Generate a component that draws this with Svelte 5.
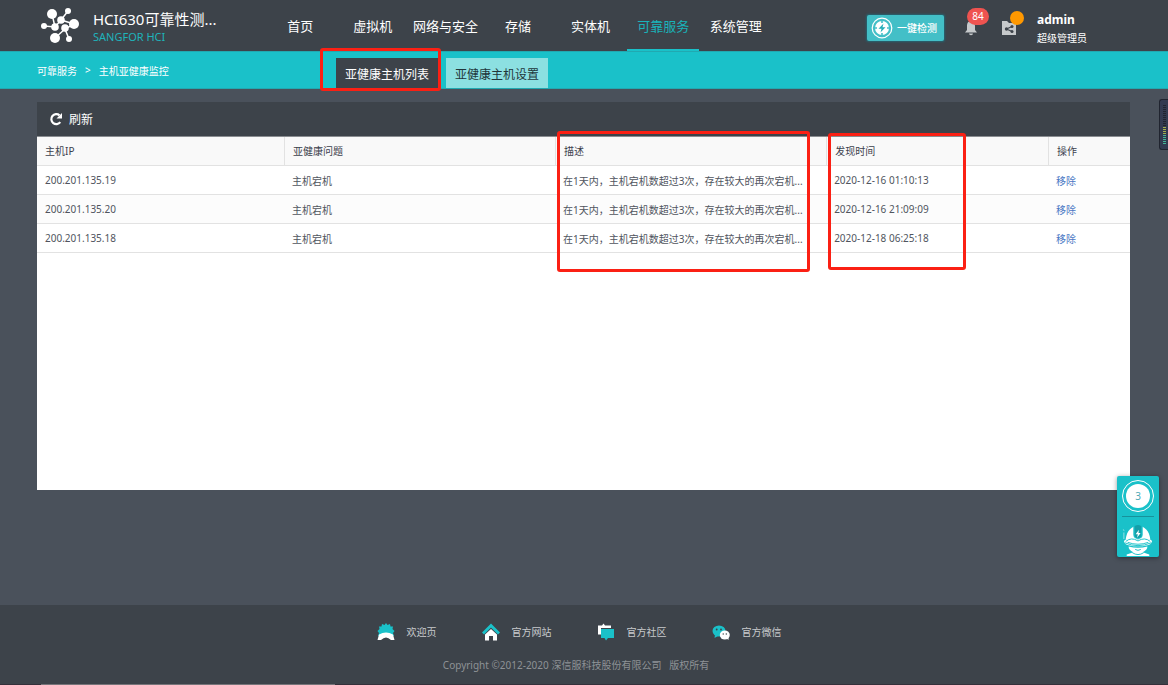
<script>
	let current = '可靠服务';
	let activeTab = '亚健康主机列表';

	const navItems = ['首页', '虚拟机', '网络与安全', '存储', '实体机', '可靠服务', '系统管理'];
	const tabs = ['亚健康主机列表', '亚健康主机设置'];

	const problem = '主机宕机';
	const desc = '在1天内，主机宕机数超过3次，存在较大的再次宕机...';

	let hosts = [
		{ ip: '200.201.135.19', problem, desc, time: '2020-12-16 01:10:13' },
		{ ip: '200.201.135.20', problem, desc, time: '2020-12-16 21:09:09' },
		{ ip: '200.201.135.18', problem, desc, time: '2020-12-18 06:25:18' }
	];

	function removeHost(ip) {
		hosts = hosts.filter((h) => h.ip !== ip);
	}

	// level meter, top to bottom
	const meter = Array.from({ length: 20 }, (_, i) => (i < 11 ? 'off' : i < 15 ? 'mid' : 'low'));
</script>

<div class="page">
	<header class="header">
		<div class="brand">
			<svg class="logo" viewBox="0 0 40 36" width="40" height="36">
				<g stroke="#fff" stroke-width="1.5" fill="none">
					<path d="M11 6 L14 19 L3 18 M14 19 L20 12 L27 3 M20 12 L33 16 L24 21 L28 31 M24 21 L14 30" />
				</g>
				<g fill="#fff">
					<circle cx="11" cy="6" r="5" />
					<circle cx="27" cy="3" r="3" />
					<circle cx="20" cy="12" r="3.8" />
					<circle cx="33" cy="16" r="5" />
					<circle cx="3" cy="18" r="3" />
					<circle cx="14" cy="19" r="3.8" />
					<circle cx="24" cy="20" r="3.8" />
					<circle cx="14" cy="30" r="5" />
					<circle cx="28" cy="31" r="3" />
				</g>
			</svg>
			<div class="brand-text">
				<span class="title">HCI630可靠性测...</span>
				<span class="sub">SANGFOR HCI</span>
			</div>
		</div>

		<nav class="nav">
			{#each navItems as item}
				<a href="#top" class:active={item === current} on:click={() => (current = item)}>{item}</a>
			{/each}
		</nav>

		<div class="tools">
			<button class="check">
				<svg viewBox="0 0 22 22" width="22" height="22">
					<circle cx="11" cy="11" r="9.8" fill="none" stroke="#fff" stroke-width="1.2" />
					<circle cx="11" cy="11" r="7" fill="#fff" />
					<path d="M11 3v3M11 16v3M3 11h3M16 11h3" stroke="#43bfc7" stroke-width="1.6" />
					<path d="M12.5 6.500L7.500 11.800h3L9.500 15.500l5-5.300h-3z" fill="#27aeb8" />
				</svg>
				一键检测
			</button>
			<button class="icon-btn bell" aria-label="告警">
				<svg viewBox="0 0 14 16" width="14" height="16">
					<path d="M7 1C4 1 3 3.500 3 6v4L1 12.500h12L11 10V6c0-2.500-1-5-4-5z" fill="#c6c9cb" />
					<path d="M5 13.500h4a2 1.700 0 0 1-4 0z" fill="#c6c9cb" />
				</svg>
				<span class="count">84</span>
			</button>
			<button class="icon-btn task" aria-label="任务">
				<svg viewBox="0 0 16 16" width="16" height="16">
					<path d="M1 1h5l2 2h7v12H1z" fill="#c6c9cb" />
					<path d="M11 6.500L5.500 9l5.500 2.500" fill="none" stroke="#3d434a" stroke-width="1.100" />
					<circle cx="5.500" cy="9" r="1.700" fill="#3d434a" />
					<circle cx="11" cy="6.500" r="1.500" fill="#3d434a" />
					<circle cx="11" cy="11.500" r="1.500" fill="#3d434a" />
				</svg>
				<span class="dot"></span>
			</button>
			<div class="user">
				<strong>admin</strong>
				<span>超级管理员</span>
			</div>
		</div>
	</header>

	<div class="subbar">
		<div class="crumbs">
			<a href="#top">可靠服务</a>
			<span>&gt;</span>
			<span>主机亚健康监控</span>
		</div>
		<div class="tabs">
			{#each tabs as tab}
				<button class="tab" class:active={tab === activeTab} on:click={() => (activeTab = tab)}>{tab}</button>
			{/each}
			<span class="mark mark-tab"></span>
		</div>
	</div>

	<main class="main">
		<section class="panel">
			<div class="toolbar">
				<button class="refresh">
					<svg viewBox="0 0 14 14" width="14" height="14">
						<path d="M11.300 10.200A5 5 0 1 1 10.500 3.300" fill="none" stroke="#fff" stroke-width="2.200" />
						<path d="M13 1v5.500H7.500z" fill="#fff" />
					</svg>
					刷新
				</button>
			</div>
			<table>
				<thead>
					<tr>
						<th class="c-ip">主机IP</th>
						<th class="c-problem">亚健康问题</th>
						<th class="c-desc">描述<span class="mark mark-desc"></span></th>
						<th class="c-time">发现时间<span class="mark mark-time"></span></th>
						<th>操作</th>
					</tr>
				</thead>
				<tbody>
					{#each hosts as host (host.ip)}
						<tr>
							<td>{host.ip}</td>
							<td>{host.problem}</td>
							<td>{host.desc}</td>
							<td>{host.time}</td>
							<td><button class="link" on:click={() => removeHost(host.ip)}>移除</button></td>
						</tr>
					{/each}
				</tbody>
			</table>
		</section>
	</main>

	<footer class="footer">
		<div class="links">
			<a href="#welcome">
				<svg viewBox="0 0 18 18" width="18" height="18">
					<path d="M9 0l1.500 2L13 1l.5 2.500 2.500 0-.5 2.500L17.500 8l-1.500 2 1 3H1l1-3L.5 8l2-2L2 3.500l2.500 0L5 1l2.500 1z" fill="#1ac1c9" />
					<path d="M2 11.500Q9 7.500 16 11.500L17.500 17H14Q9 12 4 17H.5z" fill="#fff" />
				</svg>
				欢迎页
			</a>
			<a href="#site">
				<svg viewBox="0 0 18 18" width="18" height="18">
					<path d="M9 6l6 5.500V17.500h-4v-4.500H7v4.500H3v-6z" fill="#fff" />
					<path d="M1 10.500L9 2.500l8 8" fill="none" stroke="#1ac1c9" stroke-width="3" />
				</svg>
				官方网站
			</a>
			<a href="#community">
				<svg viewBox="0 0 18 18" width="18" height="18">
					<path d="M1 2.500h4L6.500.5 8 2.500h6v2.500H4v6.500H1z" fill="#fff" />
					<path d="M4 6h13v9h-6l-2 2.500L7.500 15H4z" fill="#1ac1c9" />
				</svg>
				官方社区
			</a>
			<a href="#wechat">
				<svg viewBox="0 0 18 18" width="18" height="18">
					<ellipse cx="7" cy="8" rx="6.500" ry="5.500" fill="#1ac1c9" />
					<path d="M3 12l-.5 3L6 13z" fill="#1ac1c9" />
					<circle cx="4.700" cy="6.500" r=".9" fill="#3d434a" />
					<circle cx="9" cy="6.500" r=".9" fill="#3d434a" />
					<ellipse cx="12.800" cy="12" rx="5" ry="4.500" fill="#fff" />
					<path d="M14 15l2.500 2V14z" fill="#fff" />
					<circle cx="11.200" cy="11" r=".7" fill="#3d434a" />
					<circle cx="14.300" cy="11" r=".7" fill="#3d434a" />
				</svg>
				官方微信
			</a>
		</div>
		<p class="copy">Copyright ©2012-2020 深信服科技股份有限公司 &nbsp; 版权所有</p>
		<div class="edge"><span></span></div>
	</footer>
</div>

<aside class="helper">
	<button class="ring" aria-label="待处理"><span>3</span></button>
	<button class="robot" aria-label="助手">
		<svg viewBox="0 0 34 34" width="34" height="34">
			<path d="M4 16C5 7 10 2 17 2s12 5 13 14z" fill="#fff" />
			<path d="M12 1.500Q17 -1 22 1.500v10c0 6-10 6-10 0z" fill="#1ac1c9" />
			<path d="M13.500 2Q17 0 20.500 2v10c0 4-7 4-7 0z" fill="#139fa9" />
			<path d="M18 6l-3.500 5h2.300L16 14.500l3.800-5h-2.300z" fill="#fff" />
			<path d="M2 18Q7 12.500 17 16.500q10-4 15 1.500-1 4-5 4.500Q17 25 7 22.500 3 22 2 18z" fill="#fff" />
			<path d="M4 18.500Q10 13.500 17 18q7-4.500 13 .5M3 20Q17 26 31 20M6 19.500Q17 23.500 28 19.500" fill="none" stroke="#1ac1c9" stroke-width="1" />
			<path d="M7 24Q17 26.500 27 24q0 4-5 6l7 2.500V34H5v-1.500L12 30q-5-2-5-6z" fill="#fff" />
			<path d="M14 27q3 2 6 0M11 30.500q6 4 12 0" fill="none" stroke="#1ac1c9" stroke-width="1" />
			<path d="M1 6l1.500 1M2 9v7" fill="none" stroke="#9fe3e6" stroke-width="1" />
		</svg>
	</button>
</aside>

<div class="meter">
	{#each meter as level}
		<i class={level}></i>
	{/each}
</div>

<style>
	:global(body) {
		margin: 0;
		background: #4a515b;
	}

	.page {
		min-height: 100vh;
		display: flex;
		flex-direction: column;
		font-family: "Noto Sans", "Noto Sans CJK SC", sans-serif;
		font-size: 10px;
		color: #fff;
	}

	button {
		font: inherit;
		color: inherit;
		border: none;
		background: none;
		padding: 0;
		cursor: pointer;
	}

	a {
		color: inherit;
		text-decoration: none;
	}

	/* header */
	.header {
		height: 51px;
		display: flex;
		align-items: center;
		background: #3d434a;
		padding: 0 80px 0 41px;
	}

	.brand {
		width: 223px;
		display: flex;
		align-items: center;
		gap: 12px;
	}

	.brand-text {
		display: flex;
		flex-direction: column;
		white-space: nowrap;
		padding-top: 2px;
	}

	.title {
		font-size: 15px;
		line-height: 20px;
	}

	.sub {
		font-size: 11px;
		line-height: 16px;
		color: #1fb3bb;
	}

	.nav {
		width: 508px;
		height: 51px;
		display: grid;
		grid-template-columns: repeat(7, 1fr);
		font-size: 13px;
		line-height: 53px;
		text-align: center;
	}

	.nav a {
		box-sizing: border-box;
		height: 51px;
		white-space: nowrap;
	}

	.nav a.active {
		color: #19b3ba;
		border-bottom: 2px solid #1ac1c9;
	}

	.tools {
		margin-left: auto;
		display: flex;
		align-items: center;
		gap: 20px;
		padding-top: 4px;
	}

	.check {
		display: flex;
		align-items: center;
		gap: 4px;
		height: 26px;
		padding: 0 7px 0 4px;
		background: #43bfc7;
		border-radius: 2px;
		box-shadow: 0 0 2px 1px #256572;
		font-weight: 500;
		white-space: nowrap;
	}

	.icon-btn {
		position: relative;
		display: flex;
	}

	.count {
		position: absolute;
		left: 3px;
		top: -12px;
		width: 22px;
		height: 17px;
		border-radius: 9px;
		background: #ef5350;
		line-height: 17px;
		text-align: center;
	}

	.dot {
		position: absolute;
		left: 9px;
		top: -9px;
		width: 14px;
		height: 14px;
		border-radius: 50%;
		background: #ff9800;
	}

	.task {
		margin-left: 3px;
	}

	.user {
		width: 51px;
		display: flex;
		flex-direction: column;
		padding-top: 2px;
		line-height: 18px;
		white-space: nowrap;
	}

	.user strong {
		font-size: 12px;
	}

	/* breadcrumb + tabs */
	.subbar {
		box-sizing: border-box;
		height: 38px;
		display: flex;
		background: #1ac1c9;
		border-top: 1px solid #21a9b1;
		border-bottom: 1px solid #21a9b1;
		padding-left: 37px;
	}

	.crumbs {
		width: 299px;
		display: flex;
		align-items: center;
		gap: 8px;
	}

	.tabs {
		position: relative;
		display: flex;
		align-items: flex-end;
		gap: 8px;
	}

	.tab {
		height: 30px;
		padding: 2px 9px 0;
		font-size: 12px;
		background: #8ce0e1;
		color: #22363a;
		white-space: nowrap;
	}

	.tab.active {
		background: #3d434a;
		color: #fff;
	}

	/* red highlight frames */
	.mark {
		position: absolute;
		box-sizing: border-box;
		border: 3px solid #fb2014;
		border-radius: 3px;
		pointer-events: none;
		z-index: 2;
	}

	.mark-tab {
		left: -16px;
		top: -4px;
		width: 121px;
		height: 43px;
	}

	.mark-desc {
		left: 1px;
		top: -6px;
		width: 253px;
		height: 141px;
	}

	.mark-time {
		left: 1px;
		top: -4px;
		width: 138px;
		height: 137px;
	}

	/* content */
	.main {
		flex: 1;
		display: flex;
		padding: 13px 38px 115px 37px;
	}

	.panel {
		flex: 1;
		background: #fff;
		color: #50555e;
	}

	.toolbar {
		height: 34px;
		display: flex;
		align-items: center;
		padding-left: 12px;
		background: #3d434a;
		color: #fff;
		border-bottom: 1px solid #8a8d91;
	}

	.refresh {
		display: flex;
		align-items: center;
		gap: 6px;
		font-size: 12px;
	}

	table {
		width: 100%;
		table-layout: fixed;
		border-collapse: separate;
		border-spacing: 0;
	}

	th,
	td {
		box-sizing: border-box;
		height: 29px;
		padding: 0 8px;
		border-bottom: 1px solid #e2e2e2;
		text-align: left;
		white-space: nowrap;
	}

	th {
		position: relative;
		padding-bottom: 2px;
		background: #f9f9f9;
		color: #3c414d;
		font-weight: 400;
	}

	th + th {
		border-left: 1px solid #e2e2e2;
	}

	tbody tr:nth-child(even) {
		background: #fcfcfc;
	}

	.c-ip {
		width: 22.6%;
	}

	.c-problem,
	.c-desc {
		width: 24.8%;
	}

	.c-time {
		width: 20.3%;
	}

	.link {
		color: #4a78c4;
	}

	/* footer */
	.footer {
		height: 80px;
		background: #3d434a;
		color: #c8cacc;
		display: flex;
		flex-direction: column;
		align-items: center;
	}

	.links {
		display: flex;
		gap: 45px;
		padding: 18px 10px 0 0;
	}

	.links a {
		display: flex;
		align-items: center;
		gap: 12px;
		line-height: 18px;
	}

	.copy {
		margin: 15px 0 0;
		padding-right: 16px;
		line-height: 18px;
		color: #8e9296;
	}

	.edge {
		align-self: stretch;
		margin-top: auto;
		padding-left: 41px;
		background: #35303a;
	}

	.edge span {
		display: block;
		width: 294px;
		height: 1px;
		background: #77757a;
	}

	/* floating helper */
	.helper {
		position: fixed;
		right: 9px;
		bottom: 128px;
		width: 42px;
		height: 81px;
		display: flex;
		flex-direction: column;
		align-items: center;
		background: #1ac1c9;
		border-radius: 2px;
		box-shadow: 0 1px 5px rgba(0, 0, 0, 0.4);
		font-family: "Noto Sans", "Noto Sans CJK SC", sans-serif;
	}

	.ring {
		box-sizing: border-box;
		width: 32px;
		height: 32px;
		margin: 4px 0 4px;
		padding: 3px;
		border: 1px solid #fff;
		border-radius: 50%;
	}

	.ring span {
		display: block;
		height: 24px;
		border-radius: 50%;
		background: #fff;
		color: #4fa9b5;
		font-size: 10px;
		line-height: 24px;
	}

	.robot {
		width: 32px;
		padding-top: 6px;
		border-top: 1px solid #17929b;
		display: flex;
		justify-content: center;
	}

	.meter {
		position: fixed;
		right: 0;
		top: 99px;
		width: 3px;
		display: flex;
		flex-direction: column;
		gap: 1px;
		padding: 5px 2px 5px 3px;
		background: #323a50;
		border: 1px solid #20242f;
		border-right: none;
		border-radius: 3px 0 0 3px;
	}

	.meter i {
		height: 1px;
		background: #20242f;
	}

	.meter .mid {
		background: #a3b04c;
	}

	.meter .low {
		background: #45b596;
	}
</style>
